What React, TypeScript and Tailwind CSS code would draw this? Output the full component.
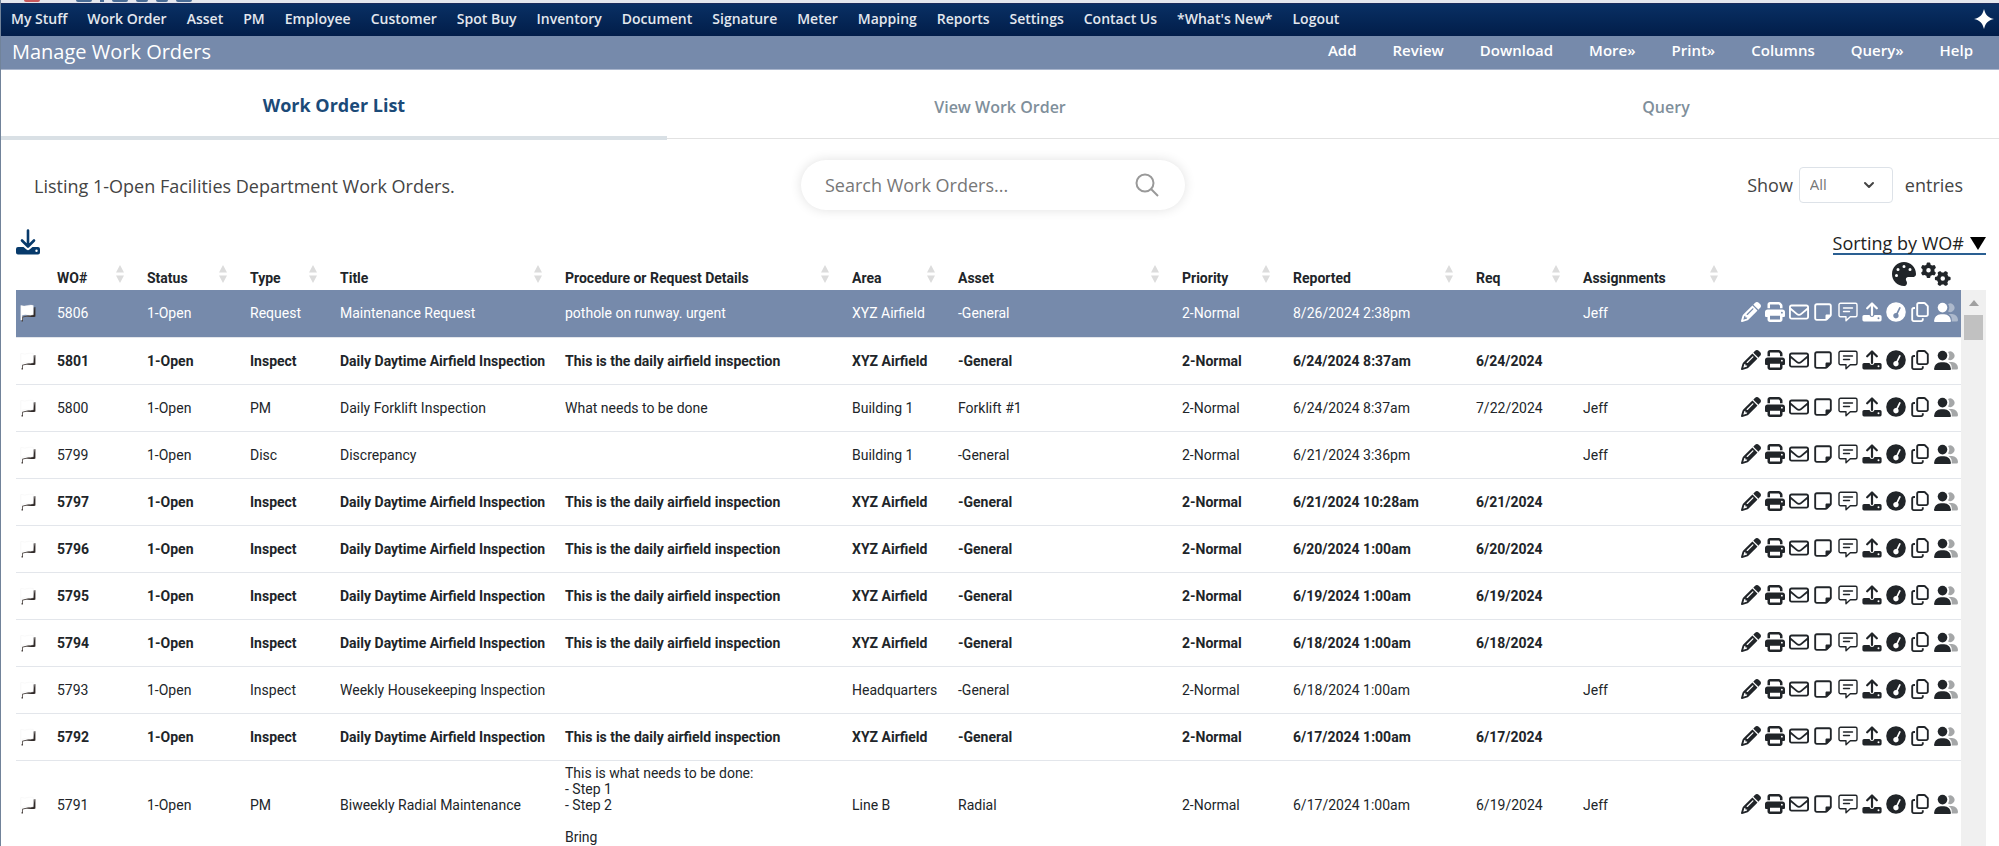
import { FaPencil, FaPrint, FaRegEnvelope, FaRegNoteSticky, FaRegCopy, FaPalette, FaGears } from "react-icons/fa6"
import { FiChevronDown } from "react-icons/fi"

const mainMenu = [
    "My Stuff", "Work Order", "Asset", "PM", "Employee", "Customer", "Spot Buy", "Inventory", "Document",
    "Signature", "Meter", "Mapping", "Reports", "Settings", "Contact Us", "*What's New*", "Logout",
]

const pageMenu = ["Add", "Review", "Download", "More»", "Print»", "Columns", "Query»", "Help"]

const columns = [
    "WO#", "Status", "Type", "Title", "Procedure or Request Details", "Area", "Asset", "Priority", "Reported", "Req", "Assignments",
]

const daily = "Daily Daytime Airfield Inspection"
const dailyText = "This is the daily airfield inspection"

const orders = [
    { wo: "5806", type: "Request", title: "Maintenance Request", details: "pothole on runway. urgent", area: "XYZ Airfield", asset: "-General", reported: "8/26/2024 2:38pm", req: "", assigned: "Jeff", bold: false },
    { wo: "5801", type: "Inspect", title: daily, details: dailyText, area: "XYZ Airfield", asset: "-General", reported: "6/24/2024 8:37am", req: "6/24/2024", assigned: "", bold: true },
    { wo: "5800", type: "PM", title: "Daily Forklift Inspection", details: "What needs to be done", area: "Building 1", asset: "Forklift #1", reported: "6/24/2024 8:37am", req: "7/22/2024", assigned: "Jeff", bold: false },
    { wo: "5799", type: "Disc", title: "Discrepancy", details: "", area: "Building 1", asset: "-General", reported: "6/21/2024 3:36pm", req: "", assigned: "Jeff", bold: false },
    { wo: "5797", type: "Inspect", title: daily, details: dailyText, area: "XYZ Airfield", asset: "-General", reported: "6/21/2024 10:28am", req: "6/21/2024", assigned: "", bold: true },
    { wo: "5796", type: "Inspect", title: daily, details: dailyText, area: "XYZ Airfield", asset: "-General", reported: "6/20/2024 1:00am", req: "6/20/2024", assigned: "", bold: true },
    { wo: "5795", type: "Inspect", title: daily, details: dailyText, area: "XYZ Airfield", asset: "-General", reported: "6/19/2024 1:00am", req: "6/19/2024", assigned: "", bold: true },
    { wo: "5794", type: "Inspect", title: daily, details: dailyText, area: "XYZ Airfield", asset: "-General", reported: "6/18/2024 1:00am", req: "6/18/2024", assigned: "", bold: true },
    { wo: "5793", type: "Inspect", title: "Weekly Housekeeping Inspection", details: "", area: "Headquarters", asset: "-General", reported: "6/18/2024 1:00am", req: "", assigned: "Jeff", bold: false },
    { wo: "5792", type: "Inspect", title: daily, details: dailyText, area: "XYZ Airfield", asset: "-General", reported: "6/17/2024 1:00am", req: "6/17/2024", assigned: "", bold: true },
    { wo: "5791", type: "PM", title: "Biweekly Radial Maintenance", details: "This is what needs to be done:\n- Step 1\n- Step 2\n\nBring", area: "Line B", asset: "Radial", reported: "6/17/2024 1:00am", req: "6/19/2024", assigned: "Jeff", bold: false },
]

const NoteIcon = () => (
    <svg viewBox="0 0 20 20" className="size-5" fill="none" stroke="currentColor" strokeWidth="1.4" strokeLinejoin="round">
        <path d="M2.5 1.2h15a1.5 1.5 0 0 1 1.5 1.5v10.6a1.5 1.5 0 0 1-1.5 1.5h-5.2L8 18.8v-4H2.5A1.5 1.5 0 0 1 1 13.3V2.7a1.5 1.5 0 0 1 1.5-1.5z" />
        <path d="M5.5 6h9M5.5 9.5h6" strokeLinecap="round" />
    </svg>
)

const UploadIcon = () => (
    <svg viewBox="0 0 20 20" className="size-5" fill="currentColor">
        <path d="M10 13V2M5.2 6.3 10 1.5l4.8 4.8" fill="none" stroke="currentColor" strokeWidth="2.2" strokeLinecap="round" strokeLinejoin="round" />
        <path fillRule="evenodd" d="M2 13h5.5a2.6 2.6 0 0 0 5 0H18a1.6 1.6 0 0 1 1.6 1.6v3.2A1.6 1.6 0 0 1 18 19.4H2A1.6 1.6 0 0 1 .4 17.8v-3.2A1.6 1.6 0 0 1 2 13zm14.5 2.3a1 1 0 1 0 0 2 1 1 0 0 0 0-2z" />
    </svg>
)

const DownloadIcon = () => (
    <svg viewBox="0 0 24 26" className="h-[26px] w-6" fill="currentColor">
        <path d="M12 1.5V17M6 11.5l6 6 6-6" fill="none" stroke="currentColor" strokeWidth="2.6" strokeLinecap="round" strokeLinejoin="round" />
        <path fillRule="evenodd" d="M2 18h5.5l3 2.6a2.3 2.3 0 0 0 3 0l3-2.6H22a2 2 0 0 1 2 2v3.500a2 2 0 0 1-2 2H2a2 2 0 0 1-2-2V20a2 2 0 0 1 2-2zm18.500 2.600a1.200 1.200 0 1 0 0 2.400 1.200 1.200 0 0 0 0-2.400z" />
    </svg>
)

const GaugeIcon = () => (
    <svg viewBox="0 0 20 20" className="size-5" fill="currentColor">
        <path fillRule="evenodd" d="M10 .2a9.8 9.8 0 1 0 0 19.6A9.8 9.8 0 0 0 10 .2zM14.3 5.2a.8.8 0 0 1 .3 1.1l-2.7 5.5a2.7 2.7 0 1 1-1.5-.8l2.7-5.4a.8.8 0 0 1 1.2-.4z" />
    </svg>
)

const UsersIcon = () => (
    <svg viewBox="0 0 24 20" className="h-5 w-6" fill="currentColor">
        <g className="opacity-40">
            <path d="M14 9.5a4.3 4.3 0 1 0 0-7.4 6.5 6.5 0 0 1 0 7.4z" />
            <path d="M14.6 12H18a6 6 0 0 1 6 6 1.5 1.5 0 0 1-1.5 1.5h-4.8a7.5 7.5 0 0 0-3.1-7.5z" />
        </g>
        <circle cx="8.5" cy="5.6" r="4.8" />
        <path d="M6.8 12.2h3.4a6.8 6.8 0 0 1 6.8 6.8 1 1 0 0 1-1 1H1a1 1 0 0 1-1-1 6.8 6.8 0 0 1 6.8-6.8z" />
    </svg>
)

const FlagIcon = () => (
    <svg viewBox="0 0 16 18" className="h-[18px] w-4">
        <path d="M15.3 3v9.5c-3.8 1.6-6.5-.6-10.3.4-.8.3-1.5.4-2 .6v4H1.5V13L13 10z" fill="#4a4340" />
        <path d="M15.3 3v9.5c-2 .8-3.5.6-5 .3L13 3.5z" fill="#1f1b1a" fillOpacity=".6" />
        <path d="M.8 16V1.5h.9c4 1.8 7-1.5 11.6 0v9.3c-4.5 1.2-7-1.2-11.3.5V16z" fill="#fff" stroke="#f0f0f0" strokeWidth=".4" />
    </svg>
)

const SortIcon = () => (
    <svg viewBox="0 0 8 18" className="mb-[3px] h-[18px] w-2" fill="#dcdcdc">
        <path d="M4 0l4 7.5H0zM4 18l4-7.5H0z" />
    </svg>
)

const actions = [
    { label: "Edit", icon: <FaPencil className="size-5" /> },
    { label: "Print", icon: <FaPrint className="size-5" /> },
    { label: "Email", icon: <FaRegEnvelope className="size-5" /> },
    { label: "Notes", icon: <FaRegNoteSticky className="size-5" /> },
    { label: "Comments", icon: <NoteIcon /> },
    { label: "Upload", icon: <UploadIcon /> },
    { label: "Meter", icon: <GaugeIcon /> },
    { label: "Copy", icon: <FaRegCopy className="size-5" /> },
    { label: "Assign", icon: <UsersIcon /> },
]

const Header = () => {
    return (
        <header className="font-['Open_Sans',sans-serif] text-white">
            <div className="flex h-[3px] items-start overflow-hidden bg-[#e4e7ee] pl-[23px]">
                <span className="h-[2px] w-4 rounded-b-full bg-[#c8595c]" />
                <span className="ml-9 h-[2px] w-4 rounded-b-full bg-[#4a6d96]" />
                <span className="ml-2 h-[2px] w-1 bg-[#4a6d96]" />
                <span className="ml-2 h-[2px] w-4 rounded-b-full bg-[#4a6d96]" />
                <span className="ml-2 h-[2px] w-3 rounded-b-full bg-[#4a6d96]" />
                <span className="ml-2 h-[2px] w-3 rounded-b-full bg-[#4a6d96]" />
                <span className="ml-2 h-[2px] w-4 rounded-b-full bg-[#4a6d96]" />
            </div>
            <nav className="flex h-[33px] items-center justify-between border-t border-[#1b2c5c] bg-linear-to-b from-[#0a3064] to-[#021d49] pr-[5px] pb-[2px] pl-[10px]">
                <div className="flex gap-5 text-sm font-semibold whitespace-nowrap text-[#e3e7ee]">
                    {mainMenu.map((item) => (
                        <a href="#" key={item}>{item}</a>
                    ))}
                </div>
                <button aria-label="Assistant">
                    <svg viewBox="0 0 20 20" className="size-5" fill="#fff">
                        <path d="M10 0c1.5 6 4 8.5 10 10-6 1.5-8.5 4-10 10C8.5 14 6 11.5 0 10 6 8.5 8.5 6 10 0z" />
                    </svg>
                </button>
            </nav>
            <div className="flex h-[34px] justify-between border-b border-[#a9b5cc] bg-[#768aab] pr-[26px] pl-[11px]">
                <h1 className="text-xl leading-8">Manage Work Orders</h1>
                <nav className="flex gap-9 text-[15px] leading-7 font-semibold">
                    {pageMenu.map((item) => (
                        <a href="#" key={item}>{item}</a>
                    ))}
                </nav>
            </div>
        </header>
    )
}

const Tabs = () => {
    return (
        <div className="grid h-[69px] grid-cols-3 border-b border-[#e2e2e2] font-['Open_Sans',sans-serif] text-base font-semibold text-[#7f8f9b]">
            <button className="h-[70px] border-b-4 border-[#d9e0e5] pt-1 text-lg font-bold text-[#1b4a78]">Work Order List</button>
            <button className="pt-1">View Work Order</button>
            <button className="pt-1">Query</button>
        </div>
    )
}

const Toolbar = () => {
    return (
        <div className="grid grid-cols-[1fr_384px_1fr] items-center pt-[21px] pr-9 pl-[22px] font-['Open_Sans',sans-serif] text-lg text-[#444]">
            <p className="pt-[2px] pl-[11px]">Listing 1-Open Facilities Department Work Orders.</p>
            <div className="flex h-[50px] items-center justify-between rounded-full bg-white pr-[26px] pl-6 shadow-[0_0_12px_rgba(0,0,0,0.12)]">
                <input aria-label="Search Work Orders" placeholder="Search Work Orders..." className="min-w-0 flex-1 outline-none placeholder:text-[#777]" />
                <svg viewBox="0 0 24 24" className="size-6" fill="none" stroke="#999" strokeWidth="2">
                    <circle cx="10" cy="10" r="8.5" />
                    <path d="M16 16l7 7" />
                </svg>
            </div>
            <div className="flex items-center justify-end">
                <label htmlFor="entries">Show</label>
                <div className="relative mr-3 ml-[6px]">
                    <select id="entries" className="h-9 w-[94px] appearance-none rounded border border-[#dde2e8] bg-white pl-[10px] text-[15px] text-[#777]">
                        <option>All</option>
                    </select>
                    <FiChevronDown className="pointer-events-none absolute top-[10px] right-4 size-4 text-[#444]" strokeWidth={3} />
                </div>
                <span>entries</span>
            </div>
        </div>
    )
}

const OrderTable = () => {
    return (
        <div className="flex pr-[13px] pl-[15px]">
            <table className="w-full min-w-0 flex-1 table-fixed border-collapse text-left text-sm leading-4 text-[#212529]">
                <colgroup>
                    <col className="w-[41px]" />
                    <col className="w-[90px]" />
                    <col className="w-[103px]" />
                    <col className="w-[90px]" />
                    <col className="w-[225px]" />
                    <col />
                    <col className="w-[106px]" />
                    <col className="w-[224px]" />
                    <col className="w-[111px]" />
                    <col className="w-[183px]" />
                    <col className="w-[107px]" />
                    <col className="w-[158px]" />
                    <col className="w-[220px]" />
                </colgroup>
                <thead>
                    <tr className="h-[31px]">
                        <th />
                        {columns.map((name) => (
                            <th key={name} className="p-0 pb-1 align-bottom whitespace-nowrap">
                                <div className="flex items-end justify-between pr-[23px]">
                                    <span className="font-bold">{name}</span>
                                    <SortIcon />
                                </div>
                            </th>
                        ))}
                        <th className="p-0 pb-1 align-bottom">
                            <div className="flex items-center justify-end gap-[5px] pr-[10px]">
                                <button aria-label="Colors"><FaPalette className="size-6" /></button>
                                <button aria-label="Settings"><FaGears className="h-6 w-[30px]" /></button>
                            </div>
                        </th>
                    </tr>
                </thead>
                <tbody>
                    {orders.map((o, index) => (
                        <tr
                            key={o.wo}
                            className={`h-[47px] border-b border-[#e3e6eb] ${index === 0 ? "bg-[#768aab] text-white" : ""} ${o.bold ? "font-bold" : ""}`}
                        >
                            <td className="pl-1"><FlagIcon /></td>
                            <td>{o.wo}</td>
                            <td>1-Open</td>
                            <td>{o.type}</td>
                            <td className="whitespace-nowrap">{o.title}</td>
                            <td className="py-1 whitespace-pre-line">{o.details}</td>
                            <td className="whitespace-nowrap">{o.area}</td>
                            <td>{o.asset}</td>
                            <td>2-Normal</td>
                            <td>{o.reported}</td>
                            <td>{o.req}</td>
                            <td>{o.assigned}</td>
                            <td>
                                <div className="flex items-center justify-between pr-[3px] pb-[2px]">
                                    {actions.map((action) => (
                                        <button key={action.label} aria-label={action.label}>{action.icon}</button>
                                    ))}
                                </div>
                            </td>
                        </tr>
                    ))}
                </tbody>
            </table>
            <div className="mt-[31px] flex w-[25px] flex-col items-center bg-[#f0f0f0] pt-[10px]">
                <svg viewBox="0 0 10 6" className="h-[6px] w-[10px]" fill="#a0a0a0">
                    <path d="M5 0l5 6H0z" />
                </svg>
                <div className="mt-[9px] h-[25px] w-[19px] bg-[#c1c1c1]" />
            </div>
        </div>
    )
}

export default function App() {
    return (
        <div className="h-screen overflow-hidden border-l border-[#71839a] bg-white font-[Roboto,sans-serif]">
            <Header />
            <Tabs />
            <Toolbar />
            <div className="flex h-[49px] items-end justify-between pr-[13px] pl-[15px]">
                <button aria-label="Download list" className="pb-1 text-[#073a6b]"><DownloadIcon /></button>
                <a href="#" className="mb-1 flex items-center gap-[6px] border-b-2 border-[#2a5f92] font-['Open_Sans',sans-serif] text-lg leading-5 text-[#222]">
                    Sorting by WO#
                    <svg viewBox="0 0 16 13" className="h-[13px] w-4" fill="#000">
                        <path d="M0 0h16L8 13z" />
                    </svg>
                </a>
            </div>
            <OrderTable />
        </div>
    )
}
